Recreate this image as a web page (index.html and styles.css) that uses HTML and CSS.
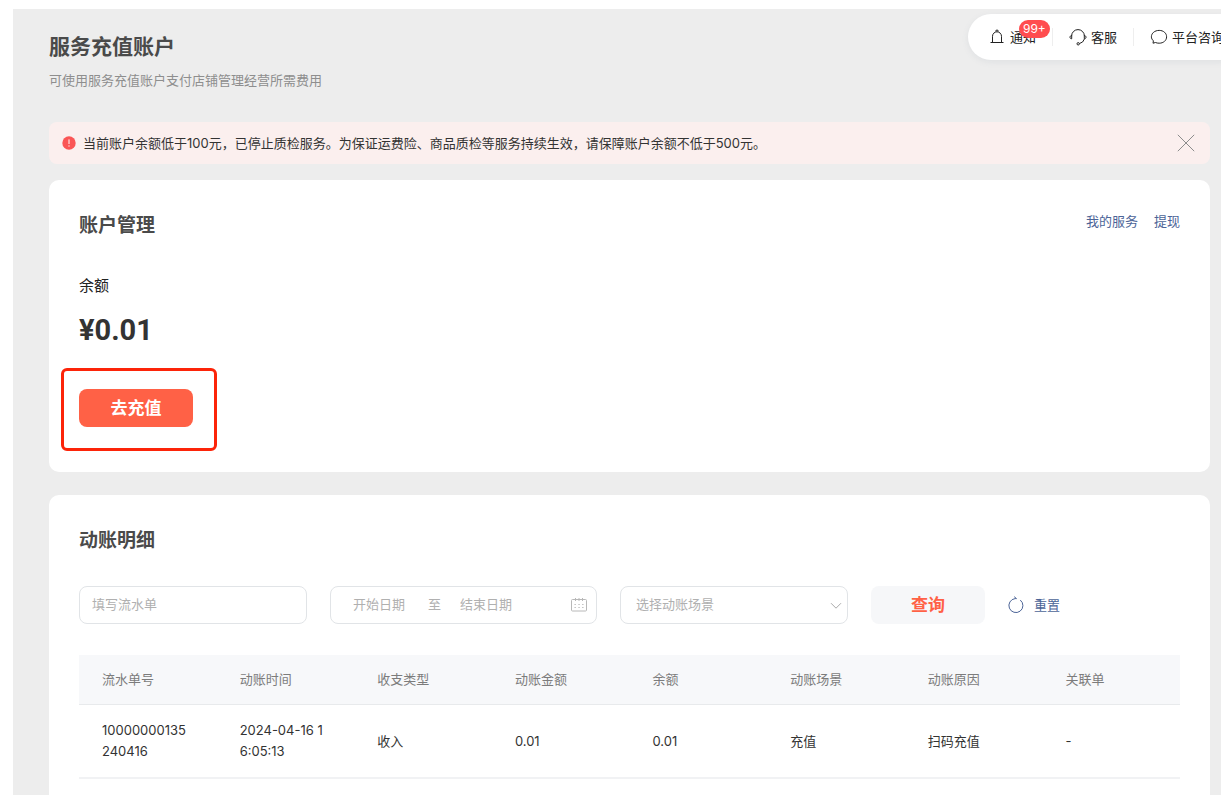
FILE: index.html
```html
<!DOCTYPE html>
<html lang="zh-CN">
<head>
<meta charset="utf-8">
<meta name="viewport" content="width=device-width, initial-scale=1">
<title>服务充值账户</title>
<link rel="stylesheet" href="styles.css">
</head>
<body>
<div class="shell">
  <div class="panel">
    <nav class="toolbar" aria-label="快捷入口">
      <a class="tool" href="#">
        <svg class="tool-icon" viewBox="0 0 18 18" aria-hidden="true"><path d="M2.500 14.500h13M4.500 14.500V8.300a4.500 4.500 0 0 1 9 0v6.200M8 3.600a1.100 1.100 0 1 1 2 0"/></svg>
        <span class="tool-text">通知<span class="badge">99+</span></span>
      </a>
      <a class="tool" href="#">
        <svg class="tool-icon" viewBox="0 0 18 18" aria-hidden="true"><path d="M2.600 8a6.400 6.400 0 0 1 12.800 0M15.400 11a6.500 6.500 0 0 1-4.900 4.500"/><path d="M2.700 7.600v3.200c-2.300 0-2.300-3.200 0-3.200zM15.300 7.600v3.200c2.300 0 2.300-3.200 0-3.200z"/><circle cx="9.200" cy="15.800" r="1.200"/></svg>
        <span class="tool-text">客服</span>
      </a>
      <a class="tool" href="#">
        <svg class="tool-icon" viewBox="0 0 18 18" aria-hidden="true"><path d="M9.200 2.400c4.300 0 7.400 2.800 7.400 6.400s-3.100 6.400-7.400 6.400c-1.400 0-2.600-.2-3.700-.7l-2.500.7.400-2.400C2.100 11.700 1.400 10.300 1.400 8.800c0-3.600 3.300-6.400 7.800-6.400z"/></svg>
        <span class="tool-text">平台咨询</span>
      </a>
    </nav>

    <header class="page-head">
      <h1 class="page-title">服务充值账户</h1>
      <p class="page-desc">可使用服务充值账户支付店铺管理经营所需费用</p>
    </header>

    <div class="alert" role="alert">
      <svg class="alert-icon" viewBox="0 0 14 14" aria-hidden="true"><circle cx="7" cy="7" r="6.700"/><path d="M7 3.400v4.600M7 9.400v1.200"/></svg>
      <p class="alert-text">当前账户余额低于100元，已停止质检服务。为保证运费险、商品质检等服务持续生效，请保障账户余额不低于500元。</p>
      <button class="alert-close" type="button" aria-label="关闭">
        <svg class="close-icon" viewBox="0 0 18 18" aria-hidden="true"><path d="M.8.800l16.400 16.400M17.200.800L.8 17.200"/></svg>
      </button>
    </div>

    <section class="card account">
      <div class="card-head">
        <h2 class="card-title">账户管理</h2>
        <div class="card-links"><a class="link" href="#">我的服务</a><a class="link" href="#">提现</a></div>
      </div>
      <p class="balance-label">余额</p>
      <p class="balance">¥0.01</p>
      <div class="recharge">
        <button class="btn btn-primary" type="button">去充值</button>
        <span class="callout"></span>
      </div>
    </section>

    <section class="card ledger">
      <h2 class="card-title">动账明细</h2>
      <form class="filters">
        <input class="field serial" type="text" placeholder="填写流水单" aria-label="填写流水单">
        <div class="field range">
          <input class="range-input" type="text" placeholder="开始日期" aria-label="开始日期">
          <span class="range-sep">至</span>
          <input class="range-input range-end" type="text" placeholder="结束日期" aria-label="结束日期">
          <svg class="calendar" viewBox="0 0 16 14" aria-hidden="true"><rect x=".5" y="1.500" width="15" height="11.500" rx="1"/><path d="M4.500 0v3M8 0v3M11.500 0v3"/><path d="M3.500 6.500h1.300M7.400 6.500h1.300M11.200 6.500h1.300M3.500 9.500h1.300M7.400 9.500h1.300M11.200 9.500h1.300"/></svg>
        </div>
        <div class="select-wrap">
          <select class="field scene" aria-label="选择动账场景"><option>选择动账场景</option></select>
          <svg class="chevron" viewBox="0 0 12 8" aria-hidden="true"><path d="M1 1.200l5 5 5-5"/></svg>
        </div>
        <button class="btn btn-plain" type="button">查询</button>
        <button class="reset" type="reset">
          <svg class="reset-icon" viewBox="0 0 16 18" aria-hidden="true"><path d="M12.300 4.100a7 7 0 1 1-5.200-1.500h1.400M6.200.700l2.300 1.900"/></svg>
          重置
        </button>
      </form>
      <table class="table">
        <thead>
          <tr><th>流水单号</th><th>动账时间</th><th>收支类型</th><th>动账金额</th><th>余额</th><th>动账场景</th><th>动账原因</th><th>关联单</th></tr>
        </thead>
        <tbody>
          <tr><td>10000000135240416</td><td>2024-04-16 16:05:13</td><td>收入</td><td>0.01</td><td>0.01</td><td>充值</td><td>扫码充值</td><td>-</td></tr>
        </tbody>
      </table>
    </section>
  </div>
</div>
</body>
</html>
```
FILE: styles.css
```css
* {
  box-sizing: border-box;
}

body {
  margin: 0;
  background: #fff;
  color: #333;
  font: 13px/18px Inter, "Noto Sans CJK SC", sans-serif;
}

h1, h2, p {
  margin: 0;
}

a {
  text-decoration: none;
}

button, input, select {
  font: inherit;
  margin: 0;
}

button {
  border: 0;
  padding: 0;
  background: none;
  cursor: pointer;
}

svg {
  display: block;
  flex: none;
  fill: none;
  stroke: currentColor;
}

.shell {
  display: flex;
  height: 100vh;
  padding: 9px 10px 6px 13px;
}

.panel {
  position: relative;
  flex: 1;
  min-width: 0;
  overflow: hidden;
  padding: 24px 11px 0 36px;
  background: #ededed;
}

.toolbar {
  position: absolute;
  top: 5px;
  right: -23px;
  display: flex;
  align-items: center;
  height: 46px;
  padding: 0 4px;
  border-radius: 23px;
  background: #fff;
  box-shadow: 0 2px 6px rgba(120, 140, 160, 0.12);
}

.tool {
  display: flex;
  align-items: center;
  gap: 4px;
  padding: 0 16px;
  color: #222;
}

.tool + .tool {
  border-left: 1px solid #eee;
}

.tool-icon {
  width: 18px;
  height: 18px;
}

.tool-text {
  position: relative;
}

.badge {
  position: absolute;
  top: -8px;
  left: 9px;
  padding: 0 4px;
  border-radius: 9px;
  background: #ff4d4f;
  color: #fff;
  font-size: 12px;
  line-height: 18px;
}

.page-title {
  font-size: 21px;
  line-height: 28px;
  font-weight: 700;
  color: #4a4a4a;
}

.page-desc {
  margin-top: 10px;
  color: #8e8e8e;
}

.alert {
  display: flex;
  align-items: center;
  gap: 7px;
  min-height: 42px;
  margin-top: 33px;
  padding: 0 15px 0 13px;
  border-radius: 8px;
  background: #fbefee;
}

.alert-icon {
  width: 14px;
  height: 14px;
  fill: #fa5555;
  stroke: none;
}

.alert-icon path {
  stroke: #fff;
}

.alert-text {
  flex: 1;
}

.alert-close {
  color: #8c8c8c;
}

.close-icon {
  width: 18px;
  height: 18px;
}

.card {
  padding: 32px 30px;
  border-radius: 10px;
  background: #fff;
}

.account {
  margin-top: 16px;
  padding-bottom: 45px;
}

.ledger {
  margin-top: 23px;
}

.card-head {
  display: flex;
  justify-content: space-between;
}

.card-title {
  font-size: 19px;
  line-height: 28px;
  font-weight: 700;
  color: #4a4a4a;
}

.card-links {
  display: flex;
  gap: 16px;
}

.link {
  color: #4c6497;
}

.balance-label {
  margin-top: 36px;
  font-size: 15px;
  line-height: 20px;
  color: #222;
}

.balance {
  margin-top: 14px;
  font: bold 29px/40px Roboto, sans-serif;
}

.recharge {
  position: relative;
  width: fit-content;
  margin-top: 39px;
}

.callout {
  position: absolute;
  inset: -21px -24px -24px -18px;
  border: 3px solid #fc2409;
  border-radius: 6px;
  pointer-events: none;
}

.btn {
  width: 114px;
  height: 38px;
  border-radius: 8px;
  font-size: 17px;
  font-weight: 700;
}

.btn-primary {
  display: block;
  background: #ff6146;
  color: #fff;
}

.btn-plain {
  background: #f6f7f9;
  color: #ff6146;
}

.filters {
  display: flex;
  flex-wrap: wrap;
  align-items: center;
  gap: 23px;
  margin-top: 31px;
}

.field {
  height: 38px;
  border: 1px solid #e1e4e7;
  border-radius: 8px;
  background: #fff;
  color: #b0b0b0;
}

::placeholder {
  color: #b0b0b0;
  opacity: 1;
}

.serial {
  width: 228px;
  padding: 0 12px 2px;
}

.range {
  display: flex;
  align-items: center;
  width: 267px;
  padding: 0 9px 0 22px;
}

.range-input {
  width: 75px;
  border: 0;
  padding: 0 0 2px;
  outline: 0;
}

.range-sep {
  width: 32px;
  padding-bottom: 2px;
}

.range-end {
  flex: 1;
}

.calendar {
  width: 16px;
  height: 14px;
  color: #b8b8b8;
}

.select-wrap {
  position: relative;
}

.scene {
  display: block;
  appearance: none;
  width: 228px;
  padding: 0 32px 2px 15px;
}

.chevron {
  position: absolute;
  top: 16px;
  right: 6px;
  width: 12px;
  height: 8px;
  color: #aaa;
  pointer-events: none;
}

.reset {
  display: flex;
  align-items: center;
  gap: 10px;
  color: #4c6497;
}

.reset-icon {
  width: 16px;
  height: 18px;
}

.table {
  width: 100%;
  margin-top: 31px;
  border-collapse: separate;
  border-spacing: 0;
  table-layout: fixed;
}

.table th {
  height: 50px;
  padding: 0 23px 2px;
  border-bottom: 1px solid #e8eaec;
  background: #f7f8fa;
  color: #7c7c7c;
  font-weight: 400;
  text-align: left;
}

.table td {
  padding: 15px 23px;
  border-bottom: 2px solid #f1f2f4;
  line-height: 21px;
  word-break: break-all;
}
```
